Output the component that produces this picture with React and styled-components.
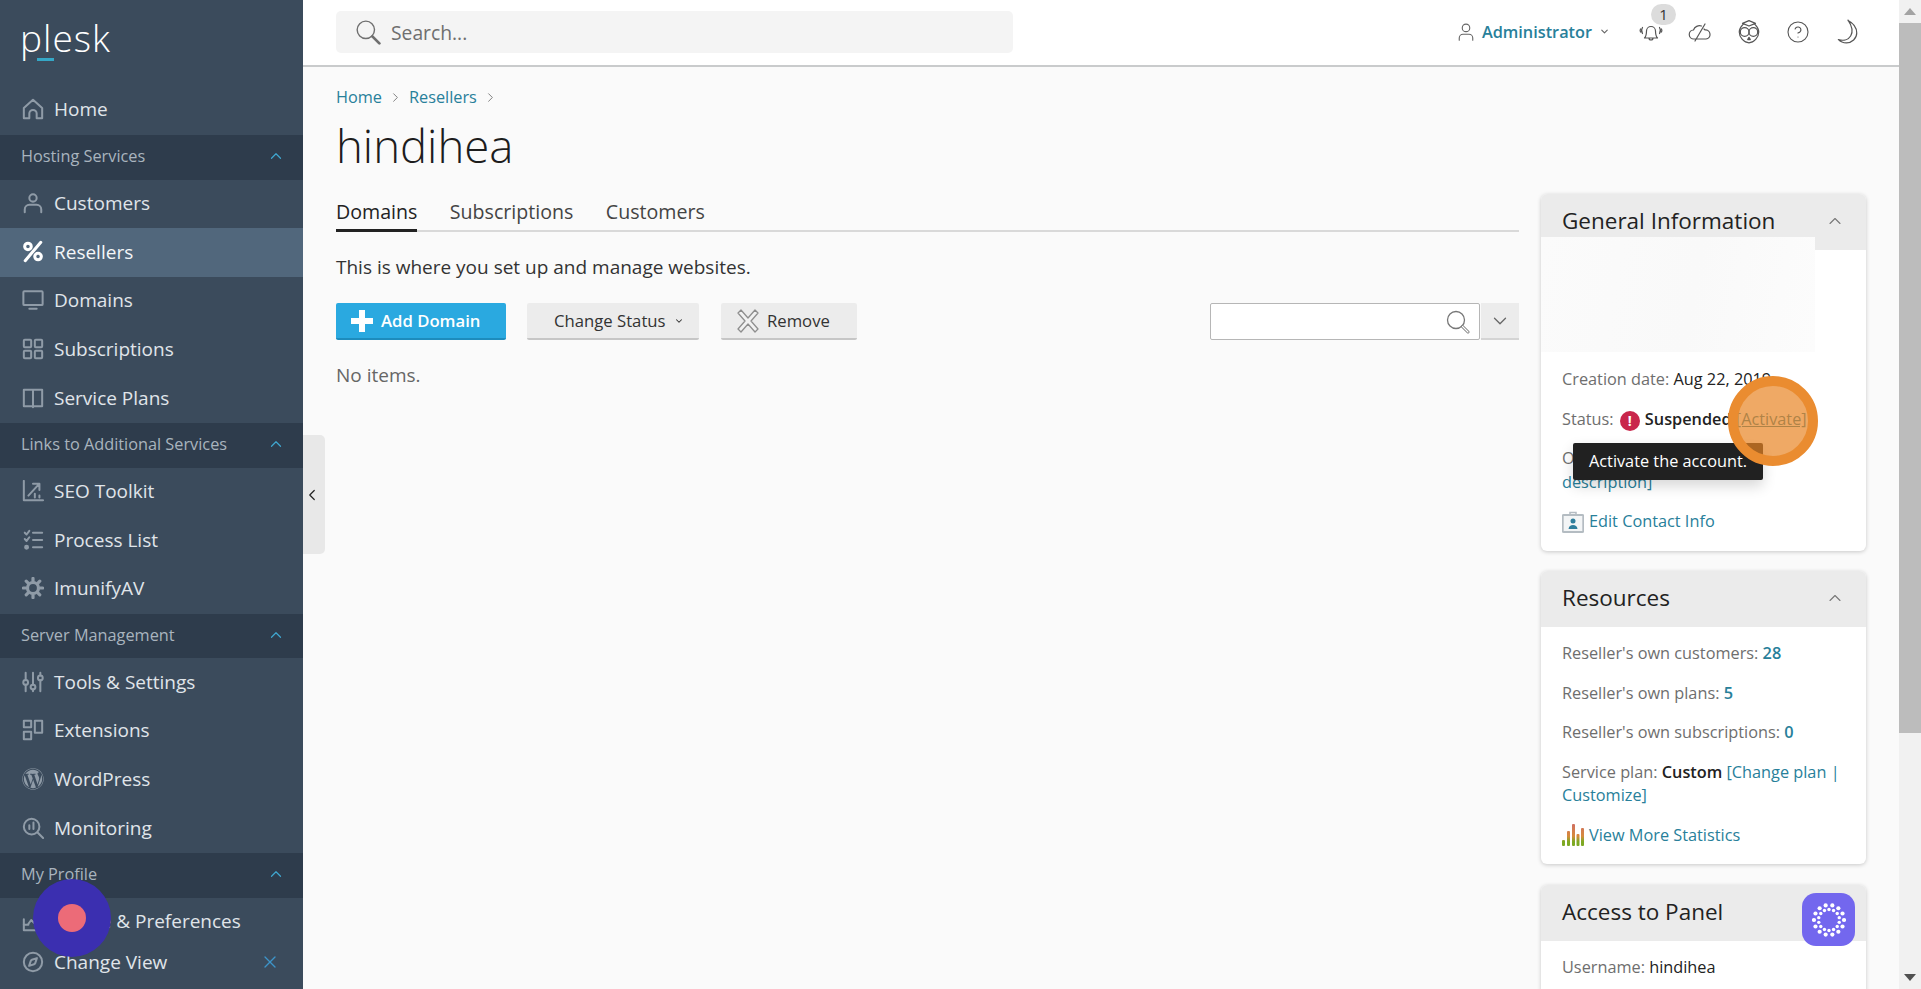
import React from "react";
import styled, { createGlobalStyle } from "styled-components";
import { FaWordpress } from "react-icons/fa";
import { Compass, X, ChevronUp, ChevronDown, ChevronLeft, ChevronRight, CircleHelp } from "lucide-react";

const Global = createGlobalStyle`
  html, body { margin: 0; padding: 0; height: 100%; overflow: hidden; }
  body { font-family: "Open Sans", "Liberation Sans", sans-serif; color: #222; background: #fafafa; }
  * { box-sizing: border-box; }
`;

const Page = styled.div`
  display: flex;
  height: 989px;
  width: 1921px;
  overflow: hidden;
  position: relative;
`;

/* ---------- sidebar ---------- */
const Sidebar = styled.nav`
  width: 303px;
  flex: none;
  background: #3b4b5c;
  display: flex;
  flex-direction: column;
  color: #e4e8ec;
`;
const LogoBox = styled.div`
  height: 85px;
  padding: 15px 0 0 20px;
  position: relative;
`;
const LogoText = styled.span`
  display: block;
  font-size: 37px;
  font-weight: 300;
  line-height: 46px;
  color: #fff;
  letter-spacing: 1px;
`;
const LogoAccent = styled.i`
  position: absolute;
  left: 37px;
  top: 58px;
  width: 17px;
  height: 3px;
  background: #35a7c6;
`;
const NavRow = styled.div`
  height: ${(p) => (p.$short ? "36px" : "48.7px")};
  flex: none;
  display: flex;
  align-items: center;
  gap: 10px;
  padding: 0 0 ${(p) => (p.$short ? "5px" : "2px")} 22px;
  font-size: 19px;
  background: ${(p) => (p.$active ? "#51677c" : "transparent")};
  color: ${(p) => (p.$active ? "#f4f6f8" : "#e0e5ea")};
  position: relative;
`;
const HomeRow = styled(NavRow)`
  height: 50px;
`;
const NavIcon = styled.span`
  width: 22px;
  height: 22px;
  flex: none;
  display: flex;
  align-items: center;
  justify-content: center;
  color: ${(p) => (p.$active ? "#fff" : "#8f9ba7")};
`;
const Section = styled.div`
  height: 44.6px;
  flex: none;
  display: flex;
  align-items: center;
  justify-content: space-between;
  padding: 0 18px 2px 21px;
  background: #2e3c4c;
  color: #a9b4be;
  font-size: 16.3px;
  svg { color: #3fa6cf; }
`;
const FooterClose = styled.span`
  position: absolute;
  right: 23px;
  top: 6px;
  color: #3d94c9;
  display: flex;
`;

/* ---------- main ---------- */
const Main = styled.div`
  flex: 1;
  min-width: 0;
  display: flex;
  flex-direction: column;
  background: #fafafa;
`;
const TopBar = styled.header`
  height: 67px;
  flex: none;
  background: #fff;
  border-bottom: 2px solid #c9cbcc;
  display: flex;
  align-items: center;
  justify-content: space-between;
  padding: 0 39px 2px 33px;
`;
const SearchBox = styled.div`
  width: 677px;
  height: 42px;
  background: #f4f4f4;
  border-radius: 5px;
  display: flex;
  align-items: center;
  gap: 10px;
  padding: 1px 0 0 19px;
  color: #6f6f6f;
  font-size: 19.3px;
`;
const TopRight = styled.div`
  display: flex;
  align-items: center;
`;
const UserLink = styled.div`
  display: flex;
  align-items: center;
  gap: 7px;
  font-size: 16.3px;
  font-weight: 600;
  color: #28809a;
  margin-right: 28px;
  svg { color: #666; }
`;
const TopIcon = styled.span`
  width: 26px;
  height: 26px;
  margin-left: 23px;
  display: flex;
  align-items: center;
  justify-content: center;
  color: #555;
  position: relative;
  &:first-of-type { margin-left: 0; }
`;
const Badge = styled.span`
  position: absolute;
  left: 13px;
  top: -15px;
  width: 25px;
  height: 21px;
  border-radius: 11px;
  background: #dcdcdc;
  color: #333;
  font-size: 15px;
  line-height: 21px;
  text-align: center;
`;
const Content = styled.div`
  flex: 1;
  padding: 18px 33px 0;
  overflow: hidden;
`;
const Crumbs = styled.div`
  display: flex;
  align-items: center;
  gap: 6px;
  height: 24px;
  font-size: 16.3px;
  color: #28809a;
  svg { color: #666; }
`;
const Title = styled.h1`
  margin: 8px 0 0;
  font-size: 45.5px;
  line-height: 56px;
  font-weight: 300;
  color: #1d1d1d;
`;
const Columns = styled.div`
  margin-top: 17px;
  display: flex;
  gap: 22px;
  align-items: flex-start;
`;
const LeftCol = styled.div`
  flex: 1;
  min-width: 0;
`;
const Tabs = styled.div`
  display: flex;
  gap: 32.5px;
  height: 42px;
  border-bottom: 2px solid #d9d9d9;
`;
const Tab = styled.div`
  font-size: 19.6px;
  line-height: 43px;
  height: 42px;
  color: ${(p) => (p.$active ? "#222" : "#444")};
  border-bottom: ${(p) => (p.$active ? "3px solid #222" : "none")};
`;
const Desc = styled.p`
  margin: 23px 0 0;
  font-size: 19px;
  line-height: 24px;
  color: #333;
`;
const Toolbar = styled.div`
  margin-top: 24px;
  display: flex;
  align-items: stretch;
  height: 37px;
`;
const Btn = styled.button`
  border: none;
  border-bottom: 2px solid #c6c6c6;
  border-radius: 2px;
  background: #ececec;
  color: #333;
  font: inherit;
  font-size: 16.7px;
  margin: 0 22px 0 0;
  padding: 0 0 0 ${(p) => p.$pad}px;
  width: ${(p) => p.$w}px;
  display: flex;
  align-items: center;
  gap: 8px;
`;
const PrimaryBtn = styled(Btn)`
  background: #2aa9e0;
  border-bottom-color: #1d8cbd;
  color: #fff;
  font-weight: 600;
  margin-right: 21px;
`;
const FilterInput = styled.div`
  margin-left: auto;
  width: 270px;
  background: #fff;
  border: 1px solid #b6b6b6;
  border-radius: 2px;
  display: flex;
  align-items: center;
  justify-content: flex-end;
  padding-right: 9px;
  color: #777;
`;
const FilterToggle = styled.div`
  width: 38px;
  margin-left: 1px;
  background: #ececec;
  border-bottom: 2px solid #d4d4d4;
  display: flex;
  align-items: center;
  justify-content: center;
  color: #666;
`;
const Empty = styled.p`
  margin: 23px 0 0;
  font-size: 19px;
  line-height: 24px;
  color: #666;
`;
const SideCol = styled.aside`
  width: 325px;
  flex: none;
  margin-top: 4px;
  display: flex;
  flex-direction: column;
  gap: 20.5px;
`;
const Card = styled.section`
  background: #fff;
  border-radius: 6px;
  box-shadow: 0 1px 4px rgba(0, 0, 0, 0.2);
`;
const CardHead = styled.div`
  height: 56px;
  background: #ebebeb;
  border-radius: 6px 6px 0 0;
  display: flex;
  align-items: center;
  justify-content: space-between;
  padding: 0 21px 3px;
  font-size: 22.5px;
  color: #222;
  svg { color: #777; }
`;
const CardBody = styled.div`
  padding: 15px 21px 17px;
`;
const Masked = styled.div`
  position: relative;
  width: 274px;
  height: 115px;
  margin: -28px 0 16px -21px;
  background: linear-gradient(100deg, #fbfbfb, #f9f9f9 55%, #fcfcfc);
`;
const Line = styled.div`
  font-size: 16.3px;
  line-height: 23.5px;
  color: #6e6e6e;
  margin-bottom: 16px;
  white-space: nowrap;
  &:last-child { margin-bottom: 0; }
`;
const Strong = styled.span`
  color: #222;
  font-weight: ${(p) => p.$w || 400};
`;
const Link = styled.span`
  color: #28809a;
  font-weight: ${(p) => p.$w || 400};
  text-decoration: ${(p) => (p.$hover ? "underline" : "none")};
`;
const IconLink = styled.div`
  display: flex;
  align-items: center;
  gap: 5px;
  font-size: 16.3px;
  line-height: 23.5px;
  color: #28809a;
`;
const AlertDot = styled.span`
  display: inline-block;
  width: 20px;
  height: 20px;
  margin: 0 5px 0 2px;
  border-radius: 50%;
  background: #c9264b;
  color: #fff;
  font-size: 14px;
  font-weight: 700;
  line-height: 20px;
  text-align: center;
  vertical-align: -1px;
`;

/* ---------- things lying over the page ---------- */
const Handle = styled.div`
  position: absolute;
  left: 303px;
  top: 435px;
  width: 22px;
  height: 119px;
  background: #e8e8e8;
  border-radius: 0 5px 5px 0;
  display: flex;
  align-items: center;
  color: #222;
`;
const Tooltip = styled.div`
  position: absolute;
  left: 1573px;
  top: 443px;
  width: 190px;
  height: 37px;
  background: #212121;
  color: #fff;
  border-radius: 2px;
  font-size: 16.3px;
  line-height: 36px;
  text-align: center;
  box-shadow: 0 6px 14px rgba(0, 0, 0, 0.16);
`;
const Spot = styled.div`
  position: absolute;
  left: 1728px;
  top: 376px;
  width: 90px;
  height: 90px;
  border-radius: 50%;
  border: 10px solid #ea8c30;
  background: rgba(232, 133, 35, 0.7);
`;
const RecDisc = styled.div`
  position: absolute;
  left: 33px;
  top: 879px;
  width: 78px;
  height: 78px;
  border-radius: 50%;
  background: #3b2fb0;
  display: flex;
  align-items: center;
  justify-content: center;
`;
const RecDot = styled.span`
  width: 28px;
  height: 28px;
  border-radius: 50%;
  background: #ec6b78;
`;
const Widget = styled.div`
  position: absolute;
  left: 1802px;
  top: 893px;
  width: 53px;
  height: 53px;
  border-radius: 14px;
  background: #7367ee;
  display: flex;
  align-items: center;
  justify-content: center;
`;

/* ---------- scrollbar ---------- */
const ScrollBar = styled.div`
  width: 22px;
  flex: none;
  background: #f1f1f1;
  display: flex;
  flex-direction: column;
  align-items: stretch;
`;
const ScrollArrow = styled.div`
  height: 23px;
  flex: none;
  display: flex;
  align-items: center;
  justify-content: center;
`;
const ScrollThumb = styled.div`
  height: 710px;
  flex: none;
  background: #bcbcbc;
`;
const ScrollRest = styled.div`
  flex: 1;
`;

/* ---------- drawings ---------- */
const S = ({ size = 22, w = 2.2, children, vb = 24 }) => (
  <svg width={size} height={size} viewBox={`0 0 ${vb} ${vb}`} fill="none" stroke="currentColor" strokeWidth={w} strokeLinecap="round" strokeLinejoin="round">
    {children}
  </svg>
);
const I = {
  home: <S><path d="M2 22V11L12 2l10 9v11h-6v-5a4 4 0 0 0-8 0v5z" /></S>,
  user: <S><circle cx="12" cy="6.500" r="4" /><path d="M3 22v-3a5 5 0 0 1 5-5h8a5 5 0 0 1 5 5v3" /></S>,
  percent: <S size={25} w={3.300}><path d="M20.500 2 3.500 22" /><circle cx="6.500" cy="6.500" r="3.600" /><circle cx="17.500" cy="17.500" r="3.600" /></S>,
  monitor: <S><rect x="1.500" y="2.500" width="21" height="15" rx="1" /><path d="M8 21.500h8" /></S>,
  grid: <S><rect x="2" y="2" width="8" height="8" rx="1" /><rect x="14" y="2" width="8" height="8" rx="1" /><rect x="2" y="14" width="8" height="8" rx="1" /><rect x="14" y="14" width="8" height="8" rx="1" /></S>,
  book: <S><path d="M12 4v18M2 3h20v18H2z" /></S>,
  seo: <S><path d="M2 1v21h21M7 17l11-12M12 4h7v7M14 19v-4M19 19v-2" /></S>,
  list: <S><path d="M3 4l2 2 3-4M3 11l2 2 3-4M12 4h10M12 12h10M12 20h10" /><circle cx="5" cy="20" r="1.600" fill="currentColor" /></S>,
  gear: <S w={3.500}><circle cx="12" cy="12" r="6" /><path d="M12 1.500v3M12 19.500v3M1.500 12h3M19.500 12h3M4.600 4.600l2.100 2.100M17.300 17.300l2.100 2.100M4.600 19.400l2.100-2.100M17.300 6.700l2.100-2.100" /></S>,
  tools: <S><path d="M4 2v8M4 15v7M12 2v13M12 20v2M20 2v3M20 10v12" /><circle cx="4" cy="12.500" r="2.600" /><circle cx="12" cy="17.500" r="2.600" /><circle cx="20" cy="7.500" r="2.600" /></S>,
  ext: <S><rect x="2" y="2" width="8" height="7" /><rect x="2" y="14" width="8" height="8" /><rect x="14" y="2" width="8" height="13" /></S>,
  wp: <FaWordpress size={22} />,
  mon: <S><circle cx="10.500" cy="10.500" r="8.500" /><path d="M17 17l6 6M8 13V9M12.500 13V6" /></S>,
  pref: <S><path d="M2 10v12h20M7 15l3-4 3 3 8-10" /><path d="M2 16h5" /></S>,
  compass: <Compass size={22} strokeWidth={2.200} />,
};

const Bell = () => (
  <S size={24} w={1.200}>
    <path d="M5.500 18h13c-1.500-1.500-2-3-2-7a4.500 4.500 0 0 0-9 0c0 4-.5 5.500-2 7zM10 18a2 2 0 0 0 4 0M3.500 7.500c-1.300 2-1.300 4 0 6M20.500 7.500c1.300 2 1.300 4 0 6M1.500 9c-.5 1-.5 2 0 3M22.500 9c.5 1 .5 2 0 3" />
  </S>
);
const CloudSlash = () => (
  <S size={24} w={1.200}>
    <path d="M8 19H6a4.500 4.500 0 0 1-.5-9 6.500 6.500 0 0 1 8-4M16 9a5 5 0 0 1 1 1 4.500 4.500 0 0 1 1 9H9M7 21 17 4" />
  </S>
);
const Owl = () => (
  <S size={26} w={1.100}>
    <path d="M12 1.500 6 4l6 2.500L18 4zM6.500 5C4.500 7 3 9 3 12c0 5 4.500 10 9 10s9-5 9-10c0-3-1.500-5-3.500-7" />
    <circle cx="8" cy="12" r="4" /><circle cx="16" cy="12" r="4" />
    <path d="M12 17l-1.200 2h2.400z" fill="currentColor" />
  </S>
);
const Moon = () => (
  <S size={26} w={1.100}>
    <path d="M13 1.500C18 4 21 8 21 13c0 5-4.500 9-9.500 9-3 0-5.500-1-7.500-3 5 1.500 9.500 0 11.500-3.500 2.200-4 .5-10-2.500-14.500z" />
  </S>
);
const MagGlass = () => (
  <S size={26} w={1.300}>
    <circle cx="10" cy="10" r="8" />
    <path d="M16 16l6.500 6.500" strokeWidth="2.500" />
  </S>
);
const Lens = ({ size = 24 }) => (
  <svg width={size} height={size} viewBox="0 0 24 24" fill="none" stroke="currentColor" strokeLinecap="round">
    <circle cx="10" cy="10" r="8.500" strokeWidth="1.300" />
    <path d="M16.500 16.500 22 22" strokeWidth="3" />
    <path d="M16.500 16.500 22 22" strokeWidth="1.200" stroke="#fff" />
  </svg>
);
const Plus = () => (
  <svg width="22" height="22" viewBox="0 0 22 22"><path d="M8 0h6v8h8v6h-8v8H8v-8H0V8h8z" fill="#fff" /></svg>
);
const RemoveIcon = () => (
  <svg width="22" height="24" viewBox="0 0 22 24" fill="#f1f1f1" stroke="#8e8e8e" strokeWidth="1.300" strokeLinejoin="round">
    <path d="M4 1l7 8 7-8 3 3-7 8 7 8-3 3-7-8-7 8-3-3 7-8-7-8z" />
  </svg>
);
const ContactIcon = () => (
  <svg width="22" height="22" viewBox="0 0 22 22">
    <rect x="0.700" y="4" width="20.600" height="17" rx="1" fill="#f3f5f6" stroke="#b4bcc2" strokeWidth="2" />
    <path d="M8 4V1.500h6V4" fill="none" stroke="#b4bcc2" strokeWidth="1.500" />
    <circle cx="11" cy="10" r="2.500" fill="#2f7f9d" />
    <path d="M6.500 18c.5-3 2-4 4.500-4s4 1 4.500 4z" fill="#2f7f9d" />
  </svg>
);
const StatsIcon = () => (
  <svg width="22" height="22" viewBox="0 0 22 22">
    <defs>
      <linearGradient id="barGrad" x1="0" y1="0" x2="0" y2="22" gradientUnits="userSpaceOnUse">
        <stop offset="0" stopColor="#cf6f62" />
        <stop offset="0.55" stopColor="#d78a3c" />
        <stop offset="0.8" stopColor="#7ea924" />
      </linearGradient>
    </defs>
    {[[0, 16, 3], [5, 7, 3], [10, 0, 3], [14.500, 10, 3], [19, 4, 3]].map(([x, y, w]) => (
      <rect key={x} x={x} y={y} width={w} height={22 - y} fill="url(#barGrad)" rx="1" />
    ))}
  </svg>
);
const DotRing = () => {
  const dots = [];
  for (let i = 0; i < 14; i++) {
    const a = (i / 14) * Math.PI * 2;
    dots.push([17 + Math.cos(a) * 15, 17 + Math.sin(a) * 15, 2.100]);
    const b = ((i + 0.5) / 14) * Math.PI * 2;
    dots.push([17 + Math.cos(b) * 10.500, 17 + Math.sin(b) * 10.500, 1.700]);
  }
  return (
    <svg width="34" height="34" viewBox="0 0 34 34" fill="#fff">
      {dots.map(([x, y, r], i) => <circle key={i} cx={x} cy={y} r={r} />)}
    </svg>
  );
};
const ArrowUp = () => <svg width="12" height="7" viewBox="0 0 12 7"><path d="M6 0l6 7H0z" fill="#a3a3a3" /></svg>;
const ArrowDown = () => <svg width="12" height="7" viewBox="0 0 12 7"><path d="M0 0h12L6 7z" fill="#505050" /></svg>;

const Nav = ({ icon, children, active }) => (
  <NavRow $active={active}>
    <NavIcon $active={active}>{I[icon]}</NavIcon>
    {children}
  </NavRow>
);
const Sec = ({ children }) => (
  <Section>
    {children}
    <ChevronUp size={18} strokeWidth={1.600} />
  </Section>
);

export default function App() {
  return (
    <Page>
      <Global />
      <Sidebar>
        <LogoBox>
          <LogoText>plesk</LogoText>
          <LogoAccent />
        </LogoBox>
        <HomeRow>
          <NavIcon>{I.home}</NavIcon>
          Home
        </HomeRow>
        <Sec>Hosting Services</Sec>
        <Nav icon="user">Customers</Nav>
        <Nav icon="percent" active>Resellers</Nav>
        <Nav icon="monitor">Domains</Nav>
        <Nav icon="grid">Subscriptions</Nav>
        <Nav icon="book">Service Plans</Nav>
        <Sec>Links to Additional Services</Sec>
        <Nav icon="seo">SEO Toolkit</Nav>
        <Nav icon="list">Process List</Nav>
        <Nav icon="gear">ImunifyAV</Nav>
        <Sec>Server Management</Sec>
        <Nav icon="tools">Tools &amp; Settings</Nav>
        <Nav icon="ext">Extensions</Nav>
        <Nav icon="wp">WordPress</Nav>
        <Nav icon="mon">Monitoring</Nav>
        <Sec>My Profile</Sec>
        <Nav icon="pref">Profile &amp; Preferences</Nav>
        <NavRow $short>
          <NavIcon>{I.compass}</NavIcon>
          Change View
          <FooterClose><X size={20} strokeWidth={1.600} /></FooterClose>
        </NavRow>
      </Sidebar>

      <Main>
        <TopBar>
          <SearchBox>
            <MagGlass />
            Search...
          </SearchBox>
          <TopRight>
            <UserLink>
              <S size={18} w={1.500}><circle cx="12" cy="6.500" r="5" /><path d="M3 23v-3a5 5 0 0 1 5-5h8a5 5 0 0 1 5 5v3" /></S>
              <span>Administrator</span>
              <ChevronDown size={11} strokeWidth={2.500} />
            </UserLink>
            <TopIcon><Bell /><Badge>1</Badge></TopIcon>
            <TopIcon><CloudSlash /></TopIcon>
            <TopIcon><Owl /></TopIcon>
            <TopIcon><CircleHelp size={24} strokeWidth={1.100} /></TopIcon>
            <TopIcon><Moon /></TopIcon>
          </TopRight>
        </TopBar>
        <Content>
          <Crumbs>
            Home <ChevronRight size={15} strokeWidth={1.300} /> Resellers <ChevronRight size={15} strokeWidth={1.300} />
          </Crumbs>
          <Title>hindihea</Title>
          <Columns>
            <LeftCol>
              <Tabs>
                <Tab $active>Domains</Tab>
                <Tab>Subscriptions</Tab>
                <Tab>Customers</Tab>
              </Tabs>
              <Desc>This is where you set up and manage websites.</Desc>
              <Toolbar>
                <PrimaryBtn $w={170} $pad={15}><Plus /> Add Domain</PrimaryBtn>
                <Btn $w={172} $pad={27}>Change Status <ChevronDown size={10} strokeWidth={2.500} /></Btn>
                <Btn $w={136} $pad={16}><RemoveIcon /> Remove</Btn>
                <FilterInput><Lens /></FilterInput>
                <FilterToggle><ChevronDown size={22} strokeWidth={1.400} /></FilterToggle>
              </Toolbar>
              <Empty>No items.</Empty>
            </LeftCol>
            <SideCol>
              <Card>
                <CardHead>General Information <ChevronUp size={20} strokeWidth={1.300} /></CardHead>
                <CardBody>
                  <Masked />
                  <Line>Creation date: <Strong $w={500}>Aug 22, 2019</Strong></Line>
                  <Line>Status: <AlertDot>!</AlertDot><Strong $w={600}>Suspended</Strong> <Link $hover>[Activate]</Link></Line>
                  <Line>Owner: <Link>[Edit<br />description]</Link></Line>
                  <IconLink><ContactIcon /> Edit Contact Info</IconLink>
                </CardBody>
              </Card>
              <Card>
                <CardHead>Resources <ChevronUp size={20} strokeWidth={1.300} /></CardHead>
                <CardBody>
                  <Line>Reseller's own customers: <Link $w={600}>28</Link></Line>
                  <Line>Reseller's own plans: <Link $w={600}>5</Link></Line>
                  <Line>Reseller's own subscriptions: <Link $w={600}>0</Link></Line>
                  <Line>Service plan: <Strong $w={600}>Custom</Strong> <Link>[Change plan |<br />Customize]</Link></Line>
                  <IconLink><StatsIcon /> View More Statistics</IconLink>
                </CardBody>
              </Card>
              <Card>
                <CardHead>Access to Panel</CardHead>
                <CardBody>
                  <Line>Username: <Strong $w={500}>hindihea</Strong></Line>
                </CardBody>
              </Card>
            </SideCol>
          </Columns>
        </Content>
      </Main>

      <ScrollBar>
        <ScrollArrow><ArrowUp /></ScrollArrow>
        <ScrollThumb />
        <ScrollRest />
        <ScrollArrow><ArrowDown /></ScrollArrow>
      </ScrollBar>

      <Handle><ChevronLeft size={18} strokeWidth={1.600} /></Handle>
      <Tooltip>Activate the account.</Tooltip>
      <Spot />
      <Widget><DotRing /></Widget>
      <RecDisc><RecDot /></RecDisc>
    </Page>
  );
}
